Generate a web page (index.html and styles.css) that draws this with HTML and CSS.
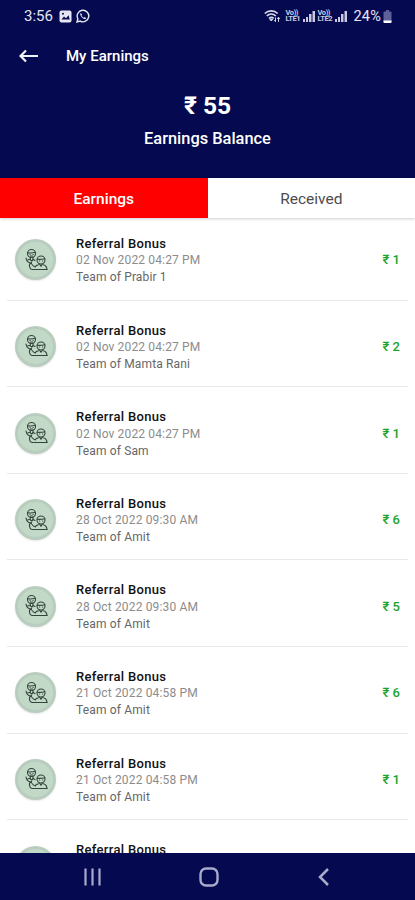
FILE: index.html
```html
<!DOCTYPE html>
<html lang="en">
<head>
    <meta charset="UTF-8">
    <meta name="viewport" content="width=device-width, initial-scale=1.0">
    <title>My Earnings</title>
    <link rel="stylesheet" href="styles.css">
</head>
<body>

    <!-- Shared icon for the referral rows -->
    <svg class="sprite" width="0" height="0">
        <symbol id="team" viewBox="0 0 24 24">
            <g fill="none" stroke="#34443b" stroke-width="1.100" stroke-linecap="round" stroke-linejoin="round">
                <circle cx="7.500" cy="5.500" r="4"/>
                <path d="M3.600 4.800c2.500.3 5.300.2 7.800-.6M6 6.500h.2M9 6.500h.2M6.500 8h2M6.300 9.400v2.400l1.500 1.400 1.200-1.600V9.400"/>
                <path d="M2 10c.2 2 .8 3.300 2.500 4.200l3 1.300M6.300 11.500l-2.500.3M9 11.500l2 1"/>
                <path d="M7.500 14.500c-1.800.8-2.300 2-2 3.500.2 2 1 3.500 3 3.500H23"/>
                <circle cx="17" cy="12" r="4"/>
                <path d="M13.200 11.300c2.500.2 5.200.1 7.600-.6M15.500 13h.2M18.500 13h.2M15.500 16l1.500 2.300 1.500-2.300"/>
                <path d="M14.500 16.800c-1.500.3-2.700.8-3.300 2M19.500 16.800c2 .5 3.300 2 3.500 4.700M8 16.500c1 1.500 2 2.200 3.500 2.500"/>
            </g>
        </symbol>
    </svg>

    <div class="phone">
        <header class="header">
            <div class="status-bar">
                <span class="time">3:56</span>
                <svg class="status-image" width="13" height="13" viewBox="0 0 13 13">
                    <rect x=".5" y=".5" width="12" height="12" rx="2" fill="#e6e6f2"/>
                    <path d="M2.500 9.500 5 6.500l2 1.800 2.500-3 1.300 4.200z" fill="#080b50"/>
                    <circle cx="4" cy="3.800" r="1" fill="#080b50"/>
                </svg>
                <svg class="status-chat" width="14" height="14" viewBox="0 0 14 14">
                    <path d="M1 13l.9-3.200A5.800 5.800 0 1 1 4.200 12.100z" fill="none" stroke="#e6e6f2" stroke-width="1.400"/>
                    <path d="M4.800 3.900c-1.200 1-.4 2.900 1.300 4.500s3.400 2.100 4.200.9l-1.700-1.200-.9.600C6.700 8.200 6 7.500 5.500 6.500l.6-.9z" fill="#e6e6f2"/>
                </svg>
                <div class="status-right">
                    <svg class="wifi" width="17" height="14" viewBox="0 0 17 14">
                        <g fill="none" stroke="#d9d9ea" stroke-width="1.700">
                            <path d="M.8 4.500C4.500 1 10 1 13.700 4.500M2.800 7c2.600-2.500 6.300-2.500 9 0M5 9.300c1.500-1.300 3.200-1.300 4.700 0"/>
                        </g>
                        <path d="M5.800 10.200h3L7.300 12zM11.500 8.500v4M10.200 11.200l1.300 1.500M14.500 12.800V8.500M13.200 9.800l1.300-1.500 1.300 1.500" fill="#d9d9ea" stroke="#d9d9ea"/>
                    </svg>
                    <span class="volte"><span>Vo))</span><span>LTE1</span></span>
                    <svg class="signal" width="13" height="12" viewBox="0 0 13 12" fill="#c9cadf">
                        <path d="M1 9h2v3H1zM4 7h2v5H4zM7 4h2.500v8H7zM10.500 1H13v11h-2.500z"/>
                    </svg>
                    <span class="volte"><span>Vo))</span><span>LTE2</span></span>
                    <svg class="signal" width="13" height="12" viewBox="0 0 13 12" fill="#c9cadf">
                        <path d="M1 9h2v3H1zM4 7h2v5H4zM7 4h2.500v8H7zM10.500 1H13v11h-2.500z"/>
                    </svg>
                    <span class="battery-text">24%</span>
                    <svg class="battery" width="9" height="13" viewBox="0 0 9 13">
                        <path d="M3 0h3v1.500h1.500q1 0 1 1V12q0 1-1 1h-6q-1 0-1-1V2.500q0-1 1-1H3z" fill="#5d609b"/>
                        <path d="M.5 10.500h8V12q0 1-1 1h-6q-1 0-1-1z" fill="#fff"/>
                    </svg>
                </div>
            </div>

            <div class="title-bar">
                <svg width="20" height="14" viewBox="0 0 20 14">
                    <path d="M7 1.500 1.500 7 7 12.500M1.500 7H19" fill="none" stroke="#f2f2fa" stroke-width="2.200"/>
                </svg>
                <h1>My Earnings</h1>
            </div>

            <div class="balance">
                <div class="balance-amount">₹ 55</div>
                <div class="balance-label">Earnings Balance</div>
            </div>
        </header>

        <nav class="tabs">
            <a class="tab active">Earnings</a>
            <a class="tab">Received</a>
        </nav>

        <main class="list">
            <div class="row">
                <div class="avatar"><svg width="24" height="24"><use href="#team"/></svg></div>
                <div class="details">
                    <h2>Referral Bonus</h2>
                    <p class="date">02 Nov 2022 04:27 PM</p>
                    <p>Team of Prabir 1</p>
                </div>
                <div class="amount">₹ 1</div>
            </div>
            <div class="row">
                <div class="avatar"><svg width="24" height="24"><use href="#team"/></svg></div>
                <div class="details">
                    <h2>Referral Bonus</h2>
                    <p class="date">02 Nov 2022 04:27 PM</p>
                    <p>Team of Mamta Rani</p>
                </div>
                <div class="amount">₹ 2</div>
            </div>
            <div class="row">
                <div class="avatar"><svg width="24" height="24"><use href="#team"/></svg></div>
                <div class="details">
                    <h2>Referral Bonus</h2>
                    <p class="date">02 Nov 2022 04:27 PM</p>
                    <p>Team of Sam</p>
                </div>
                <div class="amount">₹ 1</div>
            </div>
            <div class="row">
                <div class="avatar"><svg width="24" height="24"><use href="#team"/></svg></div>
                <div class="details">
                    <h2>Referral Bonus</h2>
                    <p class="date">28 Oct 2022 09:30 AM</p>
                    <p>Team of Amit</p>
                </div>
                <div class="amount">₹ 6</div>
            </div>
            <div class="row">
                <div class="avatar"><svg width="24" height="24"><use href="#team"/></svg></div>
                <div class="details">
                    <h2>Referral Bonus</h2>
                    <p class="date">28 Oct 2022 09:30 AM</p>
                    <p>Team of Amit</p>
                </div>
                <div class="amount">₹ 5</div>
            </div>
            <div class="row">
                <div class="avatar"><svg width="24" height="24"><use href="#team"/></svg></div>
                <div class="details">
                    <h2>Referral Bonus</h2>
                    <p class="date">21 Oct 2022 04:58 PM</p>
                    <p>Team of Amit</p>
                </div>
                <div class="amount">₹ 6</div>
            </div>
            <div class="row">
                <div class="avatar"><svg width="24" height="24"><use href="#team"/></svg></div>
                <div class="details">
                    <h2>Referral Bonus</h2>
                    <p class="date">21 Oct 2022 04:58 PM</p>
                    <p>Team of Amit</p>
                </div>
                <div class="amount">₹ 1</div>
            </div>
            <div class="row">
                <div class="avatar"></div>
                <div class="details">
                    <h2>Referral Bonus</h2>
                </div>
            </div>
        </main>

        <!-- Android navigation buttons -->
        <footer class="nav-bar">
            <svg width="20" height="20" viewBox="0 0 20 20">
                <path d="M2.500 1.500v17M9.500 1.500v17M16.500 1.500v17" stroke="#a9abcb" stroke-width="2.200"/>
            </svg>
            <svg width="20" height="20" viewBox="0 0 20 20">
                <rect x="1.500" y="1.500" width="17" height="17" rx="5.500" fill="none" stroke="#a9abcb" stroke-width="2.400"/>
            </svg>
            <svg width="20" height="20" viewBox="0 0 20 20">
                <path d="M14 2 6 10l8 8" fill="none" stroke="#a9abcb" stroke-width="2.500"/>
            </svg>
        </footer>
    </div>

</body>
</html>
```
FILE: styles.css
```css
body, html {
    margin: 0;
    padding: 0;
    height: 100%;
    font-family: Roboto, "Liberation Sans", sans-serif;
    background-color: #ffffff;
}

h1, h2, p {
    margin: 0;
}

svg {
    display: block;
    flex-shrink: 0;
}

.sprite {
    position: absolute;
}

.phone {
    display: flex;
    flex-direction: column;
    height: 900px;
    overflow: hidden;
}

.header {
    height: 178px;
    flex-shrink: 0;
    background-color: #050a50;
    color: #ffffff;
}

.status-bar {
    display: flex;
    align-items: center;
    height: 32px;
    padding: 0 23px 0 24px;
    color: #e6e6f2;
}

.time {
    width: 35px;
    font-size: 15px;
}

.status-chat {
    margin-left: 4px;
}

.status-right {
    display: flex;
    align-items: center;
    margin-left: auto;
}

.wifi {
    margin-right: 4px;
}

.volte {
    display: flex;
    flex-direction: column;
    width: 16px;
    font-size: 7.5px;
    font-weight: bold;
    line-height: 6.5px;
    letter-spacing: -0.4px;
    color: #c9cadf;
}

.signal {
    margin-left: 1px;
    margin-right: 2px;
}

.battery-text {
    margin-left: 4px;
    font-size: 14.5px;
    letter-spacing: 0.2px;
}

.battery {
    margin-left: 2px;
}

.title-bar {
    display: flex;
    align-items: center;
    height: 48px;
    padding-left: 19px;
}

.title-bar h1 {
    margin-left: 27px;
    font-size: 15px;
    font-weight: 500;
}

.balance {
    padding-top: 11px;
    text-align: center;
}

.balance-amount {
    font-size: 24.5px;
    font-weight: bold;
    line-height: 30px;
}

.balance-label {
    margin-top: 7px;
    font-size: 16.4px;
    font-weight: 500;
    line-height: 22px;
}

.tabs {
    display: flex;
    height: 40px;
    flex-shrink: 0;
    box-shadow: 0 1px 3px rgba(0, 0, 0, 0.2);
}

.tab {
    flex: 1;
    line-height: 43px;
    text-align: center;
    font-size: 15.5px;
    color: #4c4c4c;
}

.tab.active {
    background-color: #ff0000;
    color: #ffffff;
    font-weight: 500;
}

.list {
    flex: 1;
    min-height: 0;
    overflow: hidden;
    padding: 0 7px;
}

.row {
    display: flex;
    box-sizing: border-box;
    height: 82.6px;
    margin-bottom: 4px;
    padding: 17px 8px 0;
    border-bottom: 1px solid #e9e9e9;
}

.avatar {
    display: flex;
    align-items: center;
    justify-content: center;
    box-sizing: border-box;
    width: 41px;
    height: 41px;
    margin-top: 4.4px;
    border: 3px solid #b9cdbf;
    border-radius: 50%;
    background-color: #c2d9c8;
    box-shadow: 0 1px 2px rgba(0, 0, 0, 0.1);
}

.details {
    flex: 1;
    margin-left: 20px;
    font-size: 12px;
    line-height: 17px;
    letter-spacing: 0.15px;
    color: #666666;
}

.details h2 {
    font-size: 13px;
    font-weight: 500;
    line-height: 17.4px;
    letter-spacing: 0.32px;
    color: #111111;
}

.details .date {
    color: #8c8c8c;
}

.amount {
    margin-top: 16.4px;
    font-size: 13px;
    font-weight: 500;
    line-height: 17px;
    color: #1ca32c;
}

.nav-bar {
    display: flex;
    align-items: center;
    justify-content: space-between;
    height: 47px;
    flex-shrink: 0;
    padding: 0 81px 0 83px;
    background-color: #050a50;
}
```
